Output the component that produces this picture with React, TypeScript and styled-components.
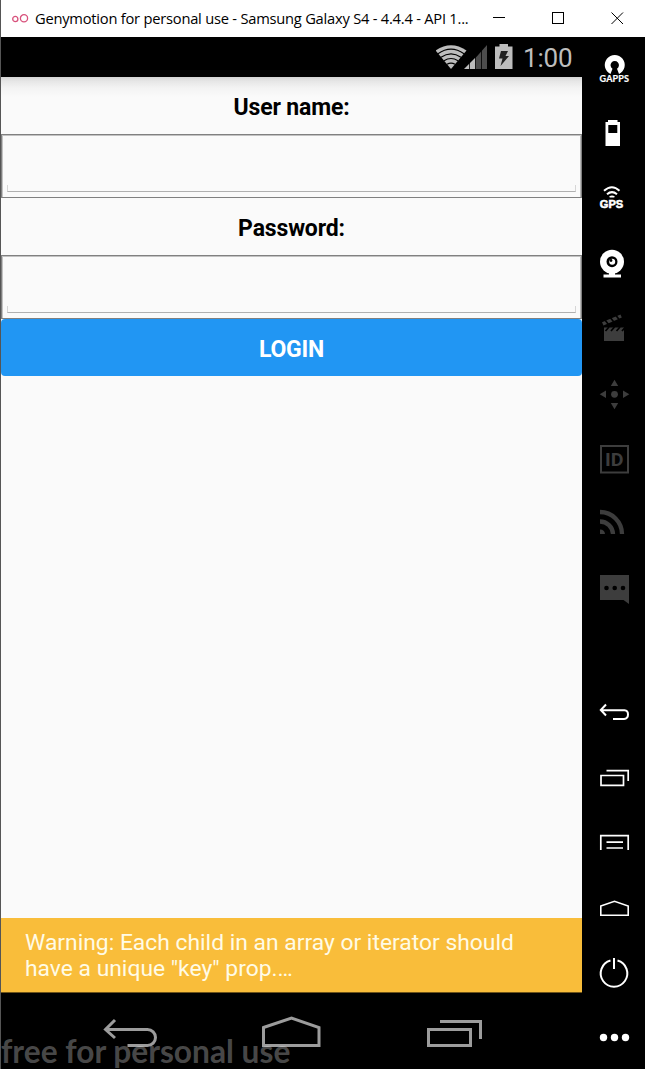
import React from "react";
import styled, { createGlobalStyle } from "styled-components";

const GlobalStyle = createGlobalStyle`
  * { box-sizing: border-box; }
  body { margin: 0; background: #000; overflow: hidden; }
  svg { display: block; flex: none; }
`;

const Window = styled.div`
  width: 645px;
  height: 1069px;
  display: flex;
  flex-direction: column;
  background: #000;
  overflow: hidden;
`;

const TitleBar = styled.header`
  height: 37px;
  display: flex;
  align-items: center;
  flex: none;
  padding-left: 11px;
  background: #fff;
  border-left: 1px solid #555;
`;

const Title = styled.span`
  width: 436px;
  margin-left: 6px;
  padding-bottom: 1px;
  font: 400 14.7px/20px "Open Sans", sans-serif;
  letter-spacing: -0.23px;
  color: #000;
  white-space: nowrap;
`;

const WindowControls = styled.div`
  display: flex;
  gap: 46px;
  margin-left: 22px;
`;

const Body = styled.div`
  flex: 1;
  display: flex;
`;

const Device = styled.main`
  position: relative;
  width: 582px;
  display: flex;
  flex-direction: column;
  border-left: 1px solid #555;
  font-family: Roboto, sans-serif;
`;

const StatusBar = styled.div`
  height: 40px;
  display: flex;
  align-items: center;
  justify-content: flex-end;
  padding-right: 9px;
  background: #000;
`;

const Clock = styled.span`
  width: 50px;
  margin-left: 10px;
  font-size: 26px;
  line-height: 40px;
  padding-top: 2px;
  letter-spacing: -0.2px;
  color: #bdbdbd;
  white-space: nowrap;
`;

const Screen = styled.section`
  height: 841px;
  background: linear-gradient(#d4d4d4 0, #e6e6e6 4px, #f3f3f3 11px, #fafafa 20px);
`;

const Label = styled.label`
  display: block;
  height: 57px;
  font-size: 23px;
  font-weight: 700;
  letter-spacing: -0.15px;
  line-height: 61px;
  text-align: center;
  color: #000;
`;

const Field = styled.div`
  height: 64px;
  display: flex;
  align-items: flex-end;
  padding: 0 5px 5px 5px;
  border: 1px solid #808080;
  box-shadow: inset 1px 1px #c2c2c2, inset -1px 0 #b8b8b8;
`;

const Underline = styled.div`
  flex: 1;
  height: 7px;
  border: 1px solid #d6d6d6;
  border-top: 0;
  border-bottom-color: #b0b0b0;
`;

const LoginButton = styled.button`
  display: block;
  width: 100%;
  height: 57px;
  padding: 4px 0 0;
  border: 0;
  border-radius: 4px;
  background: #2196f3;
  color: #fff;
  font: 700 23px/53px Roboto, sans-serif;
  letter-spacing: -0.2px;
`;

const Warning = styled.div`
  height: 75px;
  padding: 12px 24px 0;
  background: #f9bd3a;
  border-bottom: 1px solid #6e5319;
  color: #fffbe6;
  font-size: 22.85px;
  line-height: 26px;
  white-space: pre-line;
`;

const NavBar = styled.nav`
  height: 76px;
  display: flex;
  padding: 21px 0 0 101px;
`;

const NavIcon = styled.svg<{ $gap?: number }>`
  margin-right: ${(p) => p.$gap ?? 0}px;
`;

const Watermark = styled.div`
  position: absolute;
  left: 0;
  bottom: 0;
  height: 35px;
  font: 700 31.7px/35px Lato, sans-serif;
  color: rgba(255, 255, 255, 0.29);
  white-space: nowrap;
`;

const Sidebar = styled.aside`
  width: 63px;
  display: flex;
  flex-direction: column;
  justify-content: space-between;
`;

const ToolGroup = styled.div`
  display: flex;
  flex-direction: column;
`;

const ToolSvg = styled.svg<{ $dim?: boolean }>`
  color: ${(p) => (p.$dim ? "#3d3d3d" : "#fff")};
`;

function Tool({ dim, h = 65, children }: { dim?: boolean; h?: number; children: React.ReactNode }) {
  return (
    <ToolSvg $dim={dim} width="63" height={h} viewBox={`0 0 63 ${h}`} fill="currentColor">
      {children}
    </ToolSvg>
  );
}

const line = { fill: "none", stroke: "currentColor", strokeWidth: 2 };

export default function App() {
  return (
    <Window>
      <GlobalStyle />
      <TitleBar>
        <svg width="17" height="12" fill="none" stroke="#d8527c" strokeWidth="1.3">
          <circle cx="3.300" cy="6" r="2.600" />
          <circle cx="12" cy="5.300" r="3.600" />
        </svg>
        <Title>Genymotion for personal use - Samsung Galaxy S4 - 4.4.4 - API 1...</Title>
        <WindowControls>
          <svg width="13" height="13" stroke="#000"><path d="M0 5.5h12" /></svg>
          <svg width="13" height="13" stroke="#000" fill="none"><rect x=".5" y=".5" width="11" height="11" /></svg>
          <svg width="13" height="13" stroke="#000"><path d="M.5.5l11.5 11.5M12 .5L.5 12" /></svg>
        </WindowControls>
      </TitleBar>
      <Body>
        <Device>
          <StatusBar>
            <svg width="77" height="26" viewBox="0 0 77 26" fill="#bdbdbd">
              <path d="M-.5 6.5Q15-4 30.500 6.500L15 25z" />
              <g fill="none" stroke="#000" strokeWidth="1.1">
                <path d="M2 9.700Q15 .5 28 9.700M5 13.300q10-6.800 20 0M8 16.800q7-4.600 14 0M11 20.300q4-2.400 8 0" />
              </g>
              <path fill="#4d4d4d" d="M39 14.500L51 1V25H39z" />
              <path d="M28 25L39.500 13.500V25z" />
              <path d="M33.500 18v7M39.500 12v13M45.500 6v19" stroke="#000" strokeWidth=".8" />
              <path d="M59 2.500H63.500V0h8.500v2.500h4.500V25H59z" />
              <path fill="#222" d="M65 7h7l-2.500 5H73l-8.500 10 2-7.500H63z" />
            </svg>
            <Clock>1:00</Clock>
          </StatusBar>
          <Screen>
            <Label>User name:</Label>
            <Field><Underline /></Field>
            <Label>Password:</Label>
            <Field><Underline /></Field>
            <LoginButton>LOGIN</LoginButton>
          </Screen>
          <Warning>{'Warning: Each child in an array or iterator should\nhave a unique "key" prop.\u2026'}</Warning>
          <Watermark>free for personal use</Watermark>
          <NavBar>
            <NavIcon $gap={103} width="56" height="34" fill="none" stroke="#9c9c9c" strokeWidth="3">
              <path d="M13 6L3.500 15.500 13 24M4 15.500H45.500a8 8 0 0 1 0 16H25.500" />
            </NavIcon>
            <NavIcon $gap={104} width="60" height="34" fill="none" stroke="#9c9c9c" strokeWidth="3">
              <path d="M2.500 13.500L30.500 4 58 13.500V31.500H2.500z" />
            </NavIcon>
            <NavIcon width="57" height="34" fill="none" stroke="#9c9c9c" strokeWidth="3">
              <path d="M3.500 15.500H45.500V31.500H3.500zM15 7.500H55.500V25" />
            </NavIcon>
          </NavBar>
        </Device>
        <Sidebar>
          <ToolGroup>
            <Tool>
              <path d="M28.500 37A10 10 0 1 1 37 37L35 31.700A4.200 4.200 0 1 0 30.500 31.700z" />
              <text x="17.500" y="45.300" fontFamily="Lato, sans-serif" fontSize="9" fontWeight="700" stroke="currentColor" strokeWidth=".2" textLength="29.500">GAPPS</text>
            </Tool>
            <Tool>
              <path fillRule="evenodd" d="M23.500 20H26v-2h9.500v2H38v24H23.500zM26.300 23v8h9v-8z" />
            </Tool>
            <Tool>
              <path {...line} d="M22 23.800q8-7 15.500 0M25 27.200q5-4.200 10 0" />
              <path d="M27 29.800q3-2.800 6 0l-1 .7h-4z" />
              <text x="17.800" y="41" fontFamily="Liberation Sans, sans-serif" fontSize="10" fontWeight="700" stroke="currentColor" strokeWidth=".5" textLength="23.500" lengthAdjust="spacingAndGlyphs">GPS</text>
            </Tool>
            <Tool>
              <circle cx="30" cy="29.700" r="12" />
              <path d="M27 40h6v2.500h6V45.500H21.500V42.500H27z" />
              <circle cx="30" cy="29.700" r="5.500" fill="#000" />
              <circle cx="30.200" cy="29.700" r="3" />
              <circle cx="29" cy="28.500" r="1.400" fill="#000" />
            </Tool>
            <Tool dim>
              <path d="M22 30.500H42V44H22z" />
              <path d="M20 25.300L38.500 17.500l1.300 3L21.500 28.600z" />
              <path stroke="#000" strokeWidth="1.700" d="M23.500 34l3.500-4M29 34l3.500-4M34.500 34l3.500-4M40 34l3-3.500M23 23l3.500 4.500M28.500 20.700l3.500 4.500M34 18.400l3.500 4.500" />
            </Tool>
            <Tool dim>
              <circle cx="32.500" cy="32.300" r="3.400" />
              <path d="M32.500 17.700l3.700 6.300h-7.400zM32.500 47.300L28.800 41h7.400zM17.700 32.300l6.300-3.700V36zM47.300 32.300L41 28.600V36z" />
            </Tool>
            <Tool dim>
              <rect x="19" y="19" width="27" height="26.500" {...line} />
              <text x="23" y="39.200" fontFamily="Roboto, sans-serif" fontSize="18.500" fontWeight="700" textLength="18.500" lengthAdjust="spacingAndGlyphs">ID</text>
            </Tool>
            <Tool dim>
              <path d="M18 37.500a5 5 0 0 1 5 4.500h-5z" />
              <path fill="none" stroke="currentColor" strokeWidth="4.300" d="M18 29.500A13 13 0 0 1 31 42M18 20A22 22 0 0 1 40 42" />
            </Tool>
            <Tool dim>
              <path d="M18 18H47V47l-5.500-4H18z" />
              <g fill="#000"><circle cx="24.500" cy="31" r="2.300" /><circle cx="32.700" cy="31" r="2.300" /><circle cx="41" cy="31" r="2.300" /></g>
            </Tool>
          </ToolGroup>
          <ToolGroup>
            <Tool>
              <path {...line} d="M24 24.500L18.800 30l5.200 5.500M19 30.300H42.500Q46 30.500 46 34.500T42 39H31" />
            </Tool>
            <Tool>
              <path {...line} strokeWidth={1.7} d="M19 30.500H41.500V40.300H19zM24.500 25.700H46.200V36" />
            </Tool>
            <Tool>
              <path {...line} strokeWidth={1.7} d="M18.800 40V25.700H46.200V40M24.500 32.200H41M24.500 38H41" />
            </Tool>
            <Tool>
              <path {...line} strokeWidth={1.6} d="M18.800 31L32.500 26.300 46.200 31V40.200H18.800z" />
            </Tool>
            <Tool>
              <path {...line} d="M28.500 20.500A13.300 13.300 0 1 0 35.500 20.500M32 18V29" />
            </Tool>
            <Tool h={64}>
              <circle cx="21.500" cy="32.500" r="3.700" /><circle cx="32.500" cy="32.500" r="3.700" /><circle cx="43.500" cy="32.500" r="3.700" />
            </Tool>
          </ToolGroup>
        </Sidebar>
      </Body>
    </Window>
  );
}
